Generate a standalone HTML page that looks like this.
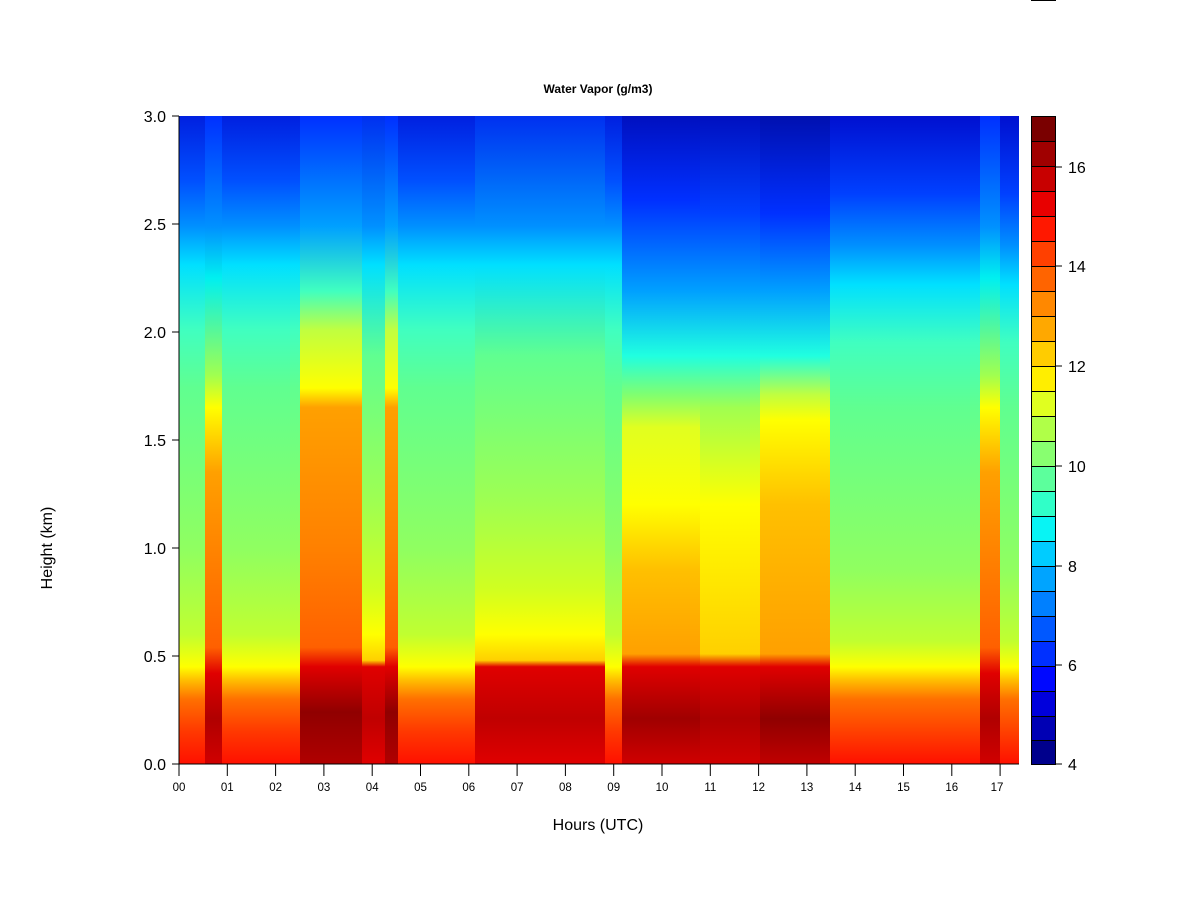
<!DOCTYPE html>
<html><head><meta charset="utf-8"><style>
html,body{margin:0;padding:0;background:#fff;}
svg{display:block;font-family:"Liberation Sans",Arial,sans-serif;}
</style></head><body>
<svg width="1200" height="900" viewBox="0 0 1200 900" xmlns="http://www.w3.org/2000/svg">
<defs>
<linearGradient id="base" x1="0" y1="0" x2="0" y2="1">
<stop offset="0" stop-color="#0020e0"/><stop offset="0.1" stop-color="#0050ff"/><stop offset="0.17" stop-color="#0090ff"/><stop offset="0.23" stop-color="#00e0ff"/><stop offset="0.33" stop-color="#40ffc0"/><stop offset="0.42" stop-color="#60ff90"/><stop offset="0.67" stop-color="#90ff60"/><stop offset="0.8" stop-color="#c0ff30"/><stop offset="0.85" stop-color="#ffff00"/><stop offset="0.87" stop-color="#ffc000"/><stop offset="0.9" stop-color="#ff7000"/><stop offset="0.95" stop-color="#ff3800"/><stop offset="1" stop-color="#ff1000"/>
</linearGradient>
<linearGradient id="baseB" x1="0" y1="0" x2="0" y2="1">
<stop offset="0" stop-color="#0010d0"/><stop offset="0.12" stop-color="#0040ff"/><stop offset="0.2" stop-color="#0090ff"/><stop offset="0.26" stop-color="#00e0ff"/><stop offset="0.35" stop-color="#40ffc0"/><stop offset="0.45" stop-color="#60ff90"/><stop offset="0.7" stop-color="#90ff60"/><stop offset="0.81" stop-color="#c0ff30"/><stop offset="0.85" stop-color="#ffff00"/><stop offset="0.87" stop-color="#ffc000"/><stop offset="0.9" stop-color="#ff7000"/><stop offset="0.95" stop-color="#ff4000"/><stop offset="1" stop-color="#ff1000"/>
</linearGradient>
<linearGradient id="hot" x1="0" y1="0" x2="0" y2="1">
<stop offset="0" stop-color="#0030ff"/><stop offset="0.17" stop-color="#00a0ff"/><stop offset="0.27" stop-color="#40ffc0"/><stop offset="0.33" stop-color="#c0ff40"/><stop offset="0.42" stop-color="#ffff00"/><stop offset="0.45" stop-color="#ffa000"/><stop offset="0.67" stop-color="#ff8000"/><stop offset="0.82" stop-color="#ff6000"/><stop offset="0.85" stop-color="#e00000"/><stop offset="0.92" stop-color="#900000"/><stop offset="1" stop-color="#b00000"/>
</linearGradient>
<linearGradient id="hot2" x1="0" y1="0" x2="0" y2="1">
<stop offset="0" stop-color="#0030ff"/><stop offset="0.17" stop-color="#0090ff"/><stop offset="0.25" stop-color="#00f0f0"/><stop offset="0.4" stop-color="#a0ff50"/><stop offset="0.45" stop-color="#ffff00"/><stop offset="0.55" stop-color="#ffa000"/><stop offset="0.82" stop-color="#ff6000"/><stop offset="0.86" stop-color="#e00000"/><stop offset="0.93" stop-color="#b00000"/><stop offset="1" stop-color="#d00000"/>
</linearGradient>
<linearGradient id="med" x1="0" y1="0" x2="0" y2="1">
<stop offset="0" stop-color="#0030f0"/><stop offset="0.17" stop-color="#0090ff"/><stop offset="0.23" stop-color="#00e0ff"/><stop offset="0.37" stop-color="#60ff90"/><stop offset="0.6" stop-color="#a0ff50"/><stop offset="0.73" stop-color="#d0ff20"/><stop offset="0.8" stop-color="#ffff00"/><stop offset="0.84" stop-color="#ffd000"/><stop offset="0.85" stop-color="#e00000"/><stop offset="0.93" stop-color="#c00000"/><stop offset="1" stop-color="#e00000"/>
</linearGradient>
<linearGradient id="hotB" x1="0" y1="0" x2="0" y2="1">
<stop offset="0" stop-color="#0010c0"/><stop offset="0.13" stop-color="#0030ff"/><stop offset="0.27" stop-color="#00a0ff"/><stop offset="0.37" stop-color="#20ffe0"/><stop offset="0.43" stop-color="#80ff70"/><stop offset="0.48" stop-color="#e0ff20"/><stop offset="0.6" stop-color="#ffff00"/><stop offset="0.7" stop-color="#ffc000"/><stop offset="0.83" stop-color="#ffa000"/><stop offset="0.85" stop-color="#e00000"/><stop offset="0.93" stop-color="#a00000"/><stop offset="1" stop-color="#d00000"/>
</linearGradient>
<linearGradient id="medB" x1="0" y1="0" x2="0" y2="1">
<stop offset="0" stop-color="#0010c0"/><stop offset="0.15" stop-color="#0040ff"/><stop offset="0.27" stop-color="#00a0ff"/><stop offset="0.37" stop-color="#20ffe0"/><stop offset="0.45" stop-color="#a0ff50"/><stop offset="0.6" stop-color="#ffff00"/><stop offset="0.83" stop-color="#ffd000"/><stop offset="0.85" stop-color="#e00000"/><stop offset="0.93" stop-color="#b00000"/><stop offset="1" stop-color="#d00000"/>
</linearGradient>
<linearGradient id="hotC" x1="0" y1="0" x2="0" y2="1">
<stop offset="0" stop-color="#0010b0"/><stop offset="0.15" stop-color="#0030ff"/><stop offset="0.27" stop-color="#00a0ff"/><stop offset="0.37" stop-color="#20ffe0"/><stop offset="0.43" stop-color="#c0ff40"/><stop offset="0.47" stop-color="#ffff00"/><stop offset="0.6" stop-color="#ffc000"/><stop offset="0.83" stop-color="#ffa000"/><stop offset="0.85" stop-color="#e00000"/><stop offset="0.93" stop-color="#900000"/><stop offset="1" stop-color="#c00000"/>
</linearGradient>
</defs>
<g>
<rect x="179" y="116" width="27" height="648" fill="url(#base)"/>
<rect x="205" y="116" width="18" height="648" fill="url(#hot2)"/>
<rect x="222" y="116" width="79" height="648" fill="url(#base)"/>
<rect x="300" y="116" width="63" height="648" fill="url(#hot)"/>
<rect x="362" y="116" width="24" height="648" fill="url(#med)"/>
<rect x="385" y="116" width="14" height="648" fill="url(#hot)"/>
<rect x="398" y="116" width="78" height="648" fill="url(#base)"/>
<rect x="475" y="116" width="131" height="648" fill="url(#med)"/>
<rect x="605" y="116" width="18" height="648" fill="url(#base)"/>
<rect x="622" y="116" width="79" height="648" fill="url(#hotB)"/>
<rect x="700" y="116" width="61" height="648" fill="url(#medB)"/>
<rect x="760" y="116" width="71" height="648" fill="url(#hotC)"/>
<rect x="830" y="116" width="151" height="648" fill="url(#baseB)"/>
<rect x="980" y="116" width="21" height="648" fill="url(#hot2)"/>
<rect x="1000" y="116" width="19" height="648" fill="url(#baseB)"/>
</g>
<g stroke="#000" stroke-width="1">
<line x1="179" y1="116" x2="179" y2="764"/>
<line x1="179" y1="764" x2="1019" y2="764"/>
<line x1="172" y1="116" x2="179" y2="116"/><line x1="172" y1="224" x2="179" y2="224"/><line x1="172" y1="332" x2="179" y2="332"/><line x1="172" y1="440" x2="179" y2="440"/><line x1="172" y1="548" x2="179" y2="548"/><line x1="172" y1="656" x2="179" y2="656"/><line x1="172" y1="764" x2="179" y2="764"/>
</g>
<g font-size="16" text-anchor="end" fill="#000">
<text x="166" y="122">3.0</text><text x="166" y="230">2.5</text><text x="166" y="338">2.0</text><text x="166" y="446">1.5</text><text x="166" y="554">1.0</text><text x="166" y="662">0.5</text><text x="166" y="770">0.0</text>
</g>
<g stroke="#000">
<line x1="179" y1="764" x2="179" y2="776"/><line x1="227.3" y1="764" x2="227.3" y2="776"/><line x1="275.6" y1="764" x2="275.6" y2="776"/><line x1="323.9" y1="764" x2="323.9" y2="776"/><line x1="372.2" y1="764" x2="372.2" y2="776"/><line x1="420.5" y1="764" x2="420.5" y2="776"/><line x1="468.8" y1="764" x2="468.8" y2="776"/><line x1="517.1" y1="764" x2="517.1" y2="776"/><line x1="565.4" y1="764" x2="565.4" y2="776"/><line x1="613.7" y1="764" x2="613.7" y2="776"/><line x1="662" y1="764" x2="662" y2="776"/><line x1="710.3" y1="764" x2="710.3" y2="776"/><line x1="758.6" y1="764" x2="758.6" y2="776"/><line x1="806.9" y1="764" x2="806.9" y2="776"/><line x1="855.2" y1="764" x2="855.2" y2="776"/><line x1="903.5" y1="764" x2="903.5" y2="776"/><line x1="951.8" y1="764" x2="951.8" y2="776"/><line x1="1000.1" y1="764" x2="1000.1" y2="776"/>
</g>
<g font-size="11.5" text-anchor="middle" fill="#000">
<text x="179" y="791">00</text><text x="227.3" y="791">01</text><text x="275.6" y="791">02</text><text x="323.9" y="791">03</text><text x="372.2" y="791">04</text><text x="420.5" y="791">05</text><text x="468.8" y="791">06</text><text x="517.1" y="791">07</text><text x="565.4" y="791">08</text><text x="613.7" y="791">09</text><text x="662" y="791">10</text><text x="710.3" y="791">11</text><text x="758.6" y="791">12</text><text x="806.9" y="791">13</text><text x="855.2" y="791">14</text><text x="903.5" y="791">15</text><text x="951.8" y="791">16</text><text x="997" y="791">17</text>
</g>
<text x="598" y="830" font-size="16" text-anchor="middle">Hours (UTC)</text>
<text x="52" y="548" font-size="16" text-anchor="middle" transform="rotate(-90 52 548)">Height (km)</text>
<text x="598" y="93" font-size="12" font-weight="bold" text-anchor="middle">Water Vapor (g/m3)</text>
<g stroke="#000" stroke-width="1">
<rect x="1031.5" y="116.5" width="24" height="25" fill="#7a0000"/>
<rect x="1031.5" y="141.5" width="24" height="25" fill="#a00000"/>
<rect x="1031.5" y="166.5" width="24" height="25" fill="#c80000"/>
<rect x="1031.5" y="191.5" width="24" height="25" fill="#e80000"/>
<rect x="1031.5" y="216.5" width="24" height="25" fill="#ff1800"/>
<rect x="1031.5" y="241.5" width="24" height="25" fill="#ff4000"/>
<rect x="1031.5" y="266.5" width="24" height="25" fill="#ff6400"/>
<rect x="1031.5" y="291.5" width="24" height="25" fill="#ff8800"/>
<rect x="1031.5" y="316.5" width="24" height="25" fill="#ffa800"/>
<rect x="1031.5" y="341.5" width="24" height="25" fill="#ffcc00"/>
<rect x="1031.5" y="366.5" width="24" height="25" fill="#ffee00"/>
<rect x="1031.5" y="391.5" width="24" height="25" fill="#e0ff20"/>
<rect x="1031.5" y="416.5" width="24" height="25" fill="#b0ff48"/>
<rect x="1031.5" y="441.5" width="24" height="25" fill="#88ff70"/>
<rect x="1031.5" y="466.5" width="24" height="25" fill="#5cff9c"/>
<rect x="1031.5" y="491.5" width="24" height="25" fill="#30ffc8"/>
<rect x="1031.5" y="516.5" width="24" height="25" fill="#08f4f4"/>
<rect x="1031.5" y="541.5" width="24" height="25" fill="#00ccff"/>
<rect x="1031.5" y="566.5" width="24" height="25" fill="#00a4ff"/>
<rect x="1031.5" y="591.5" width="24" height="25" fill="#0080ff"/>
<rect x="1031.5" y="616.5" width="24" height="25" fill="#0058ff"/>
<rect x="1031.5" y="641.5" width="24" height="25" fill="#0030ff"/>
<rect x="1031.5" y="666.5" width="24" height="25" fill="#0008ff"/>
<rect x="1031.5" y="691.5" width="24" height="25" fill="#0000dc"/>
<rect x="1031.5" y="716.5" width="24" height="24" fill="#0000b4"/>
<rect x="1031.5" y="740.5" width="24" height="24" fill="#00008c"/>
<line x1="1055" y1="167" x2="1062" y2="167"/><line x1="1055" y1="266" x2="1062" y2="266"/><line x1="1055" y1="366" x2="1062" y2="366"/><line x1="1055" y1="466" x2="1062" y2="466"/><line x1="1055" y1="566" x2="1062" y2="566"/><line x1="1055" y1="665" x2="1062" y2="665"/><line x1="1055" y1="764" x2="1062" y2="764"/>
<line x1="1031" y1="0.5" x2="1056" y2="0.5"/>
</g>
<g font-size="16" fill="#000">
<text x="1068" y="173">16</text><text x="1068" y="272">14</text><text x="1068" y="372">12</text><text x="1068" y="472">10</text><text x="1068" y="572">8</text><text x="1068" y="671">6</text><text x="1068" y="770">4</text>
</g>
</svg>
</body></html>
